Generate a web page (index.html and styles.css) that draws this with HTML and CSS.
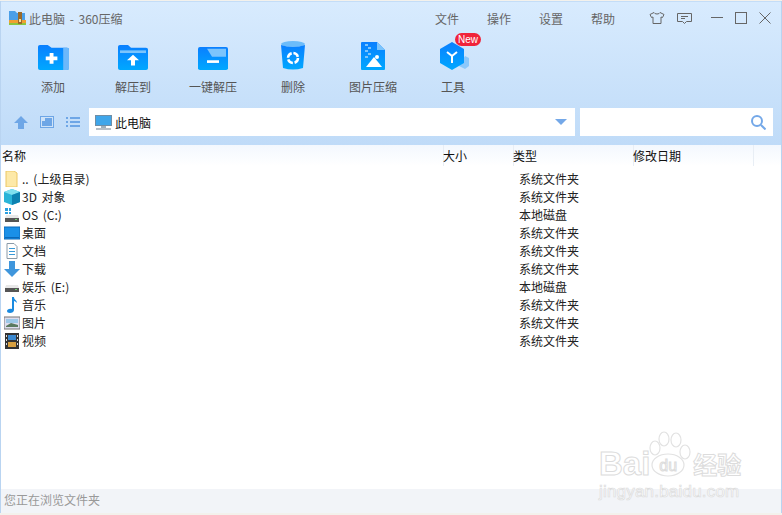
FILE: index.html
```html
<!DOCTYPE html>
<html lang="zh-CN">
<head>
<meta charset="UTF-8">
<title>此电脑 - 360压缩</title>
<link rel="stylesheet" href="styles.css">
</head>
<body>
<svg class="defs" width="0" height="0">
  <linearGradient id="blue" x1="0" y1="0" x2="0" y2="1">
    <stop offset="0" stop-color="#0a7fff"/>
    <stop offset="1" stop-color="#00a8ff"/>
  </linearGradient>
</svg>
<div class="window">
  <div class="top">
    <div class="titlebar">
      <svg class="app-icon" width="18" height="16" viewBox="0 0 18 16">
        <path d="M0 1h6l2 2h8v9H0z" fill="#4a9fe8"/>
        <rect x="0" y="10" width="17" height="3" fill="#f0a030"/>
        <rect x="0" y="13" width="17" height="2" fill="#8cc63f"/>
        <rect x="9" y="2" width="4" height="12" fill="#9a6a2a"/>
        <rect x="10" y="9" width="2" height="3" fill="#f6e3a0"/>
      </svg>
      <span class="app-title">此电脑 - 360压缩</span>
      <div class="menu">
        <span>文件</span><span>操作</span><span>设置</span><span>帮助</span>
      </div>
      <div class="win-btns">
        <svg width="16" height="14" viewBox="0 0 16 14" fill="none" stroke="#666"><path d="M5 1.500 1 3.500l1.500 3L4 6v6.500h8V6l1.500.5 1.500-3-4-2c-.5 2-5.500 2-6 0z"/></svg>
        <svg width="15" height="13" viewBox="0 0 15 13" fill="none" stroke="#666"><path d="M.5 1.500h14v8h-5l-2 2-2-2h-5z"/><path d="M4 4.500h7M4 6.500h4"/></svg>
        <svg class="gap-l" width="12" height="12" viewBox="0 0 12 12" fill="none" stroke="#666"><path d="M0 5.500h12"/></svg>
        <svg width="12" height="12" viewBox="0 0 12 12" fill="none" stroke="#666"><rect x=".5" y=".5" width="11" height="11"/></svg>
        <svg width="12" height="12" viewBox="0 0 12 12" fill="none" stroke="#666"><path d="M.5.500l11 11M11.500.500l-11 11"/></svg>
      </div>
    </div>

    <div class="toolbar">
      <div class="tool">
        <div class="tool-icon">
          <svg width="31" height="25" viewBox="0 0 32 28" preserveAspectRatio="none"><path d="M0 2q0-2 2-2h8l4 3h16q2 0 2 2v21q0 2-2 2H2q-2 0-2-2z" fill="url(#blue)"/><path d="M26 3h4q2 0 2 2v21q0 2-2 2h-4z" fill="#6cb8fb"/><path d="M13 9h4v4h4v4h-4v4h-4v-4H9v-4h4z" transform="translate(-1 0)" fill="#fff"/></svg>
        </div>
        <span>添加</span>
      </div>
      <div class="tool">
        <div class="tool-icon">
          <svg width="30" height="25" viewBox="0 0 30 28" preserveAspectRatio="none"><path d="M0 2q0-2 2-2h8l3 3h15q2 0 2 2v21q0 2-2 2H2q-2 0-2-2z" fill="url(#blue)"/><path d="M2 6h26v3H2z" fill="#7cc4fc"/><path d="M15 11l6 6h-4v6h-4v-6H9z" fill="#fff"/></svg>
        </div>
        <span>解压到</span>
      </div>
      <div class="tool">
        <div class="tool-icon">
          <svg width="30" height="23" viewBox="0 0 30 26" preserveAspectRatio="none"><path d="M0 2q0-2 2-2h26q2 0 2 2v22q0 2-2 2H2q-2 0-2-2z" fill="url(#blue)"/><path d="M9 2h19v9H14z" fill="#7cc4fc"/><rect x="9" y="15" width="12" height="3" fill="#fff"/></svg>
        </div>
        <span>一键解压</span>
      </div>
      <div class="tool">
        <div class="tool-icon">
          <svg width="24" height="29" viewBox="0 0 24 29"><ellipse cx="12" cy="3" rx="12" ry="3" fill="#6cbcfa"/><path d="M0 4q12 4 24 0l-2 23q-10 3-20 0z" fill="url(#blue)"/><circle cx="12" cy="17" r="5" fill="none" stroke="#fff" stroke-width="2.500" stroke-dasharray="6 1.800"/></svg>
        </div>
        <span>删除</span>
      </div>
      <div class="tool">
        <div class="tool-icon">
          <svg width="24" height="28" viewBox="0 0 24 28"><path d="M1 0h15l8 8v19q0 1-1 1H1q-1 0-1-1V1q0-1 1-1z" fill="url(#blue)"/><path d="M16 0l8 8h-8z" fill="#7cc4fc"/><path d="M4 2h3v2H4zM7 5h3v2H7zM4 8h3v2H4zM7 11h3v2H7zM4 14h3v2H4z" fill="#7cc4fc"/><path d="M5 25l8-10 8 10z" fill="#fff"/><circle cx="16" cy="15" r="2" fill="#fff"/></svg>
        </div>
        <span>图片压缩</span>
      </div>
      <div class="tool">
        <div class="tool-icon tool-icon-new">
          <svg width="30" height="28" viewBox="0 0 30 28"><path d="M25 14l4 2v8l-4 3-6-3z" fill="#8cc8fb"/><path d="M12 0l12 7v14l-12 7-12-7V7z" fill="url(#blue)"/><path d="M7 10l5 4 5-4M12 14v7" fill="none" stroke="#fff" stroke-width="2"/></svg>
          <span class="new-badge">New</span>
        </div>
        <span>工具</span>
      </div>
    </div>

    <div class="addressrow">
      <div class="nav-btns">
        <svg width="14" height="13" viewBox="0 0 14 13"><path d="M7 0l7 7h-4v6H4V7H0z" fill="#6ea6e6"/></svg>
        <svg width="14" height="12" viewBox="0 0 14 12"><rect x=".5" y=".5" width="13" height="11" fill="#cfe3f8" stroke="#6ea6e6"/><rect x="2" y="2" width="10" height="8" fill="#6ea6e6"/><rect x="2" y="2" width="3" height="3" fill="#cfe3f8"/></svg>
        <svg width="14" height="10" viewBox="0 0 14 10" fill="#6ea6e6"><path d="M0 0h2v2H0zM4 0h10v2H4zM0 4h2v2H0zM4 4h10v2H4zM0 8h2v2H0zM4 8h10v2H4z"/></svg>
      </div>
      <div class="address">
        <svg width="17" height="15" viewBox="0 0 17 15"><rect x=".5" y=".5" width="16" height="10" fill="#3fa6ea" stroke="#6f8ea6"/><rect x="6" y="11" width="5" height="2" fill="#9fb0bc"/><rect x="1" y="13" width="15" height="2" fill="#b5bec6"/></svg>
        <span class="address-text">此电脑</span>
        <span class="caret"></span>
      </div>
      <div class="search">
        <svg width="15" height="15" viewBox="0 0 15 15" fill="none" stroke="#74a8e8" stroke-width="2"><circle cx="6" cy="6" r="5"/><path d="M10 10l4.500 4.500"/></svg>
      </div>
    </div>
  </div>

  <div class="list">
    <div class="list-head">
      <span class="col-name">名称</span>
      <span class="col-size">大小</span>
      <span class="col-type">类型</span>
      <span class="col-date">修改日期</span>
      <span class="col-end"></span>
    </div>
    <div class="rows">
      <div class="row">
        <svg width="16" height="16" viewBox="0 0 16 16"><path d="M2 0h8l3 2v14H2z" fill="#fde9a8" stroke="#ecc765"/></svg>
        <span class="row-name">.. (上级目录)</span><span class="row-type">系统文件夹</span>
      </div>
      <div class="row">
        <svg width="16" height="16" viewBox="0 0 16 16"><path d="M8 0l8 3v10l-8 3-8-3V3z" fill="#2ab4d8"/><path d="M8 0l8 3-8 3-8-3z" fill="#7fe0ee"/><path d="M8 6l8-3v10l-8 3z" fill="#0d82b0"/></svg>
        <span class="row-name">3D 对象</span><span class="row-type">系统文件夹</span>
      </div>
      <div class="row">
        <svg width="16" height="16" viewBox="0 0 16 16"><path d="M1 1h3v3H1zM5 1h2v3H5zM1 5h3v2H1zM5 5h2v2H5z" fill="#2a9fe0"/><path d="M1 11l1-3h12l1 3z" fill="#e8e8e8"/><rect x="1" y="11" width="14" height="4" fill="#555"/><rect x="11" y="12" width="2" height="1" fill="#6fd06f"/></svg>
        <span class="row-name">OS (C:)</span><span class="row-type">本地磁盘</span>
      </div>
      <div class="row">
        <svg width="16" height="16" viewBox="0 0 16 16"><rect y="2" width="16" height="12" fill="#1a90e8" stroke="#0a68b8"/><path d="M1 12h14v1H1z" fill="#0a68b8"/></svg>
        <span class="row-name">桌面</span><span class="row-type">系统文件夹</span>
      </div>
      <div class="row">
        <svg width="16" height="16" viewBox="0 0 16 16"><path d="M3 .500h7l3 3v12H3z" fill="#fff" stroke="#8a9aa8"/><path d="M5 5h6v1H5zM5 8h6v1H5zM5 11h6v1H5z" fill="#3a9ad8"/></svg>
        <span class="row-name">文档</span><span class="row-type">系统文件夹</span>
      </div>
      <div class="row">
        <svg width="16" height="16" viewBox="0 0 16 16"><path d="M5 0h6v8h5l-8 8-8-8h5z" fill="#3f96dc"/></svg>
        <span class="row-name">下载</span><span class="row-type">系统文件夹</span>
      </div>
      <div class="row">
        <svg width="16" height="16" viewBox="0 0 16 16"><path d="M1 9l1-3h12l1 3z" fill="#e8e8e8"/><rect x="1" y="9" width="14" height="4" fill="#555"/><rect x="11" y="10" width="2" height="1" fill="#6fd06f"/></svg>
        <span class="row-name">娱乐 (E:)</span><span class="row-type">本地磁盘</span>
      </div>
      <div class="row">
        <svg width="16" height="16" viewBox="0 0 16 16"><path d="M8 0h2c0 3 3 3 3 6-1-1-2-2-3-2v9c0 2-2 3-4 3s-3-1-3-2 2-3 5-2z" fill="#1a8ae0"/></svg>
        <span class="row-name">音乐</span><span class="row-type">系统文件夹</span>
      </div>
      <div class="row">
        <svg width="16" height="16" viewBox="0 0 16 16"><rect y="2" width="16" height="12" fill="#dde" stroke="#777"/><rect x="2" y="4" width="12" height="4" fill="#9cc8e8"/><path d="M2 11l5-3 7 2v2H2z" fill="#5a7a60"/></svg>
        <span class="row-name">图片</span><span class="row-type">系统文件夹</span>
      </div>
      <div class="row">
        <svg width="16" height="16" viewBox="0 0 16 16"><rect x="1" y="0" width="14" height="16" fill="#333"/><rect x="4" y="2" width="8" height="5" fill="#3a88d0"/><rect x="4" y="9" width="8" height="5" fill="#d8a040"/><path d="M2 2h1v2H2zM2 6h1v2H2zM2 10h1v2H2zM13 2h1v2h-1zM13 6h1v2h-1zM13 10h1v2h-1z" fill="#ddd"/></svg>
        <span class="row-name">视频</span><span class="row-type">系统文件夹</span>
      </div>
    </div>
    <div class="watermark">
      <svg class="paw" width="44" height="48" viewBox="0 0 44 48" fill="#fff" stroke="#e2e2e2" stroke-width="1.200">
        <ellipse cx="6" cy="17" rx="5" ry="7"/><ellipse cx="15" cy="8" rx="5" ry="7"/><ellipse cx="27" cy="9" rx="5" ry="7"/><ellipse cx="36" cy="21" rx="5" ry="7"/>
        <ellipse cx="19" cy="34" rx="16" ry="11"/>
      </svg>
      <div class="wm-main"><span>Bai</span><span class="wm-du">du</span><span class="wm-cn">经验</span></div>
      <div class="wm-url">jingyan.baidu.com</div>
    </div>
  </div>

  <div class="status">您正在浏览文件夹</div>
</div>
</body>
</html>
```

FILE: styles.css
```css
* {
  box-sizing: border-box;
}
html, body {
  margin: 0;
  height: 100%;
}
body {
  background: #f3f1ec;
  padding: 1px 0 2px 0;
  font-family: "Noto Sans CJK SC", "Liberation Sans", sans-serif;
  font-size: 12px;
  color: #111;
}
.defs {
  position: absolute;
}
.window {
  height: 100%;
  display: flex;
  flex-direction: column;
  border-left: 1px solid #b9d4f1;
  border-right: 1px solid #b9d4f1;
  background: #fff;
}
.top {
  height: 144px;
  flex: none;
  background: linear-gradient(#d8ebfe, #bfdbf8);
  border-top: 1px solid #c4ddf7;
}
.titlebar {
  height: 32px;
  display: flex;
  align-items: center;
  padding-left: 8px;
}
.app-icon {
  margin-right: 2px;
}
.app-title {
  color: #666;
  font-size: 12px;
  word-spacing: 2px;
}
.menu {
  margin-left: auto;
  display: flex;
  gap: 28px;
  color: #666;
}
.win-btns {
  display: flex;
  align-items: center;
  gap: 12px;
  margin-left: 34px;
  padding-right: 10px;
}
.win-btns .gap-l {
  margin-left: 7px;
}
.toolbar {
  height: 74px;
  padding-left: 12px;
  display: flex;
}
.tool {
  width: 80px;
  height: 61px;
  padding-top: 8px;
  display: flex;
  flex-direction: column;
  align-items: center;
  color: #555;
}
.tool-icon {
  height: 28px;
  flex: none;
  display: flex;
  align-items: flex-end;
}
.tool > span {
  margin-top: auto;
  line-height: 16px;
}
.tool-icon-new {
  position: relative;
  padding-left: 4px;
}
.new-badge {
  position: absolute;
  left: 19px;
  top: -9px;
  width: 26px;
  height: 13px;
  border-radius: 7px;
  background: #f0233a;
  color: #fff;
  font: 10px/13px "Liberation Sans", sans-serif;
  text-align: center;
}
.addressrow {
  display: flex;
  height: 28px;
}
.nav-btns {
  width: 88px;
  display: flex;
  align-items: center;
  gap: 12px;
  padding-left: 13px;
}
.address {
  width: 486px;
  background: #fff;
  display: flex;
  align-items: center;
  padding: 0 8px 0 6px;
  color: #111;
}
.address-text {
  margin-left: 3px;
}
.caret {
  margin-left: auto;
  width: 0;
  height: 0;
  border-left: 6px solid transparent;
  border-right: 6px solid transparent;
  border-top: 6px solid #74a8e8;
}
.search {
  width: 193px;
  margin-left: 5px;
  background: #fff;
  display: flex;
  align-items: center;
  justify-content: flex-end;
  padding-right: 7px;
}
.list {
  flex: 1;
  position: relative;
}
.list-head {
  height: 21px;
  display: flex;
  line-height: 21px;
  background: linear-gradient(#f3f8fe, #fff);
  color: #111;
  text-indent: -1px;
}
.col-name {
  width: 442px;
  padding-left: 2px;
}
.col-size {
  width: 70px;
  border-left: 1px solid #e8eef5;
}
.col-type {
  width: 120px;
  border-left: 1px solid #e8eef5;
}
.col-date {
  width: 120px;
  border-left: 1px solid #e8eef5;
}
.col-end {
  border-left: 1px solid #e8eef5;
}
.rows {
  padding-top: 4px;
}
.row {
  height: 18px;
  display: flex;
  align-items: center;
  padding-left: 3px;
  line-height: 18px;
}
.row svg {
  flex: none;
  margin-right: 2px;
}
.row-name {
  width: 497px;
  color: #222;
  word-spacing: 2px;
}
.row-type {
  color: #222;
}
.watermark {
  position: absolute;
  left: 598px;
  top: 302px;
  color: #fff;
  font-family: "Liberation Sans", sans-serif;
}
.paw {
  position: absolute;
  left: 50px;
  top: -16px;
}
.wm-main {
  position: relative;
  display: flex;
  align-items: center;
  font-size: 33px;
  line-height: 30px;
  font-weight: bold;
  -webkit-text-stroke: 1px #dcdcdc;
}
.wm-du {
  font-size: 16px;
  font-weight: normal;
  margin: 4px 0 0 9px;
  width: 34px;
}
.wm-cn {
  font-size: 24px;
  font-family: "Noto Sans CJK SC", sans-serif;
}
.wm-url {
  font-size: 17px;
  letter-spacing: .2px;
  -webkit-text-stroke: .7px #dcdcdc;
  line-height: 22px;
}
.status {
  height: 24px;
  flex: none;
  background: #f2f4f8;
  color: #999;
  line-height: 22px;
  padding-left: 3px;
}
```
